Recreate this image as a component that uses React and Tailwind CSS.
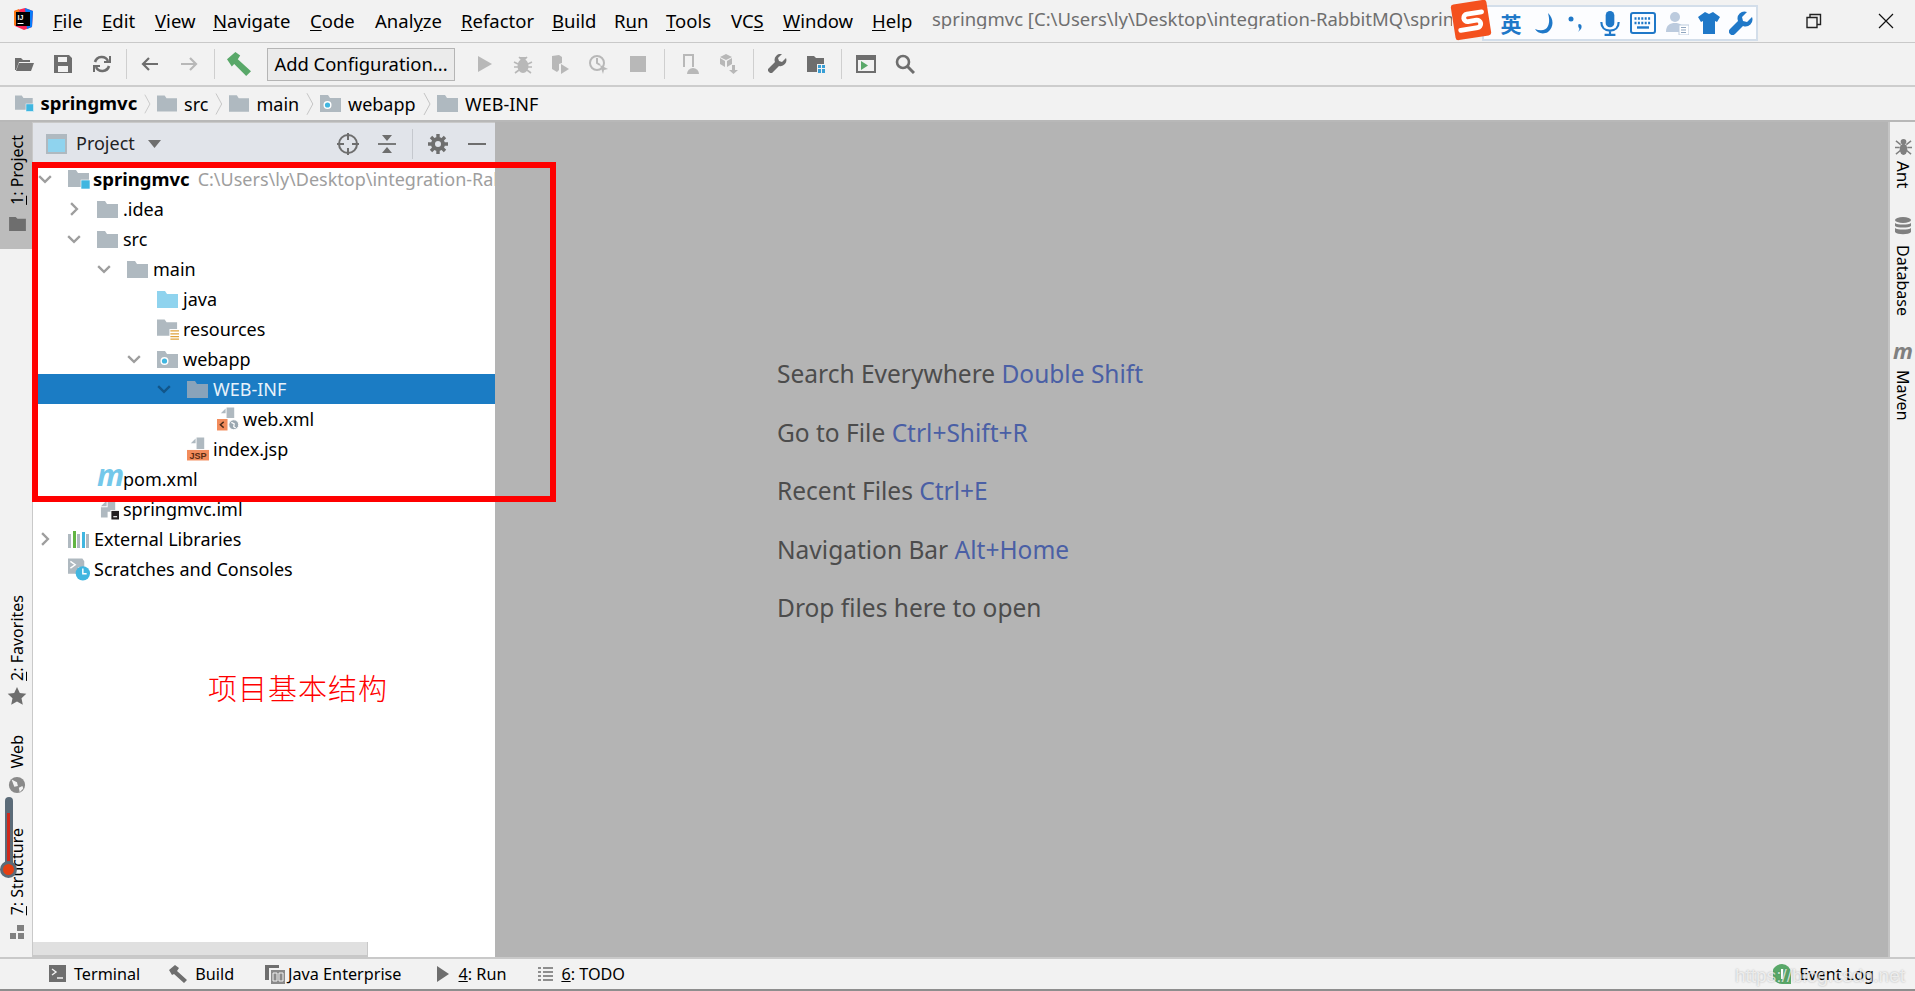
import { Fragment } from "react";

const FONT = "font-['Noto_Sans','Open_Sans',sans-serif]";

// --- icons ---
const Folder = ({ color = "#afb9c0", className = "w-[21px] h-[17px]" }) => (
  <svg viewBox="0 0 21 17" className={className}>
    <path d="M0 0h8l2 3h11v14H0z" fill={color} />
  </svg>
);

const ModuleFolder = () => (
  <svg viewBox="0 0 22 19" className="w-[22px] h-[19px]">
    <path d="M0 0h8l2 3h11v14H0z" fill="#afb9c0" />
    <rect x="13" y="10" width="9" height="9" fill="#40b6e0" stroke="#fff" strokeWidth="0.6" />
  </svg>
);

const WebFolder = ({ className = "w-[21px] h-[17px]" }) => (
  <svg viewBox="0 0 21 17" className={className}>
    <path d="M0 0h8l2 3h11v14H0z" fill="#afb9c0" />
    <circle cx="7.5" cy="10" r="4" fill="#fff" />
    <circle cx="7.5" cy="10" r="2.6" fill="#40b6e0" />
  </svg>
);

const ResourceFolder = () => (
  <svg viewBox="0 0 23 21" className="w-[23px] h-[21px]">
    <path d="M0 0h8l2 3h11v14H0z" fill="#afb9c0" />
    <rect x="13" y="10" width="10" height="11" fill="#fff" />
    <path d="M14 12h9M14 15h9M14 18h9M14 20.5h9" stroke="#e0a33c" strokeWidth="1.4" />
  </svg>
);

const Chevron = ({ open, color = "#9e9e9e" }) => (
  <svg viewBox="0 0 12 12" className="w-[14px] h-[14px]">
    <path d={open ? "M1 3.5l5 5 5-5" : "M3.5 1l5 5-5 5"} fill="none" stroke={color} strokeWidth="2" />
  </svg>
);

const XmlIcon = () => (
  <svg viewBox="0 0 23 24" className="w-[23px] h-[24px]">
    <path d="M4 11V6l5-5v5H4zM10 0h8v11h-8z" fill="#afb9c0" />
    <path d="M0 12h11v12H0z" fill="#f28c5c" />
    <path d="M7 15l-3.500 3L7 21" fill="none" stroke="#4a2a18" strokeWidth="1.5" />
    <circle cx="17.5" cy="18" r="5.2" fill="#9aa7b0" stroke="#fff" strokeWidth="1" />
    <path d="M15 15.500l3 1.500-.5 3 2 1.500" fill="none" stroke="#fff" strokeWidth="1.3" />
  </svg>
);

const JspIcon = () => (
  <svg viewBox="0 0 23 24" className="w-[23px] h-[24px]">
    <path d="M4 11V6l5-5v5H4zM10 0h8v12h-8z" fill="#afb9c0" />
    <rect x="0" y="13" width="23" height="11" fill="#f28c5c" />
    <text x="11.5" y="22.5" textAnchor="middle" fontSize="9.5" fontWeight="700" fill="#5b2d14" fontFamily="Liberation Sans">JSP</text>
  </svg>
);

const ImlIcon = () => (
  <svg viewBox="0 0 20 21" className="w-[20px] h-[21px]">
    <path d="M1 7l6-6v6H1zM8 0h8v13h-8zM1 8h7v11H1z" fill="#afb9c0" />
    <rect x="11" y="11" width="9" height="10" fill="#fff" />
    <rect x="12" y="12" width="8" height="9" fill="#231f20" />
    <rect x="14" y="17.5" width="4" height="1.2" fill="#fff" />
  </svg>
);

const LibrariesIcon = () => (
  <svg viewBox="0 0 21 17" className="w-[21px] h-[17px]">
    <path d="M0 3h3v14H0zM9 3h3v14H9z" fill="#afb9c0" />
    <path d="M5 0h3v17H5z" fill="#62b543" />
    <path d="M14 1h3v16h-3z" fill="#40b6e0" />
    <path d="M18 3h3v14h-3z" fill="#afb9c0" />
  </svg>
);

const ScratchIcon = () => (
  <svg viewBox="0 0 23 23" className="w-[23px] h-[23px]">
    <path d="M0 0h15l2 3v6h-6v7H0z" fill="#afb9c0" />
    <path d="M2.500 3l5 3.500-5 3.500" fill="none" stroke="#fff" strokeWidth="1.5" />
    <circle cx="15.5" cy="15.5" r="7.5" fill="#40b6e0" />
    <path d="M15.500 10.500v5.500h4" fill="none" stroke="#fff" strokeWidth="1.5" />
  </svg>
);

const ToolIcon = ({ children, size = "w-[20px] h-[20px]" }) => (
  <svg viewBox="0 0 20 20" className={size}>{children}</svg>
);

const GRAY = "#6e6e6e";
const DIS = "#b8b8b8";

const toolbar = [
  { w: "w-[39px]", icon: <path d="M1 4h6l2 2h7v2H5L2 16H1zM5 9h15l-3 8H2z" fill={GRAY} /> },
  { w: "w-[39px]", icon: <path fillRule="evenodd" d="M1 1h15l3 3v15H1zM5 3v5h9V3zM5 12v6h10v-6z" fill={GRAY} /> },
  { w: "w-[39px]", icon: <g fill="none" stroke={GRAY} strokeWidth="2.6"><path d="M3 8a7 7 0 0 1 13-1" /><path d="M17 12a7 7 0 0 1-13 1" /><path d="M12 8h6V2" strokeWidth="2" /><path d="M8 12H2v6" strokeWidth="2" /></g> },
  { sep: "w-[10px]" },
  { w: "w-[37px]", icon: <path d="M18 10H3M9 4l-6 6 6 6" fill="none" stroke={GRAY} strokeWidth="2.2" /> },
  { w: "w-[42px]", icon: <path d="M2 10h15M11 4l6 6-6 6" fill="none" stroke={DIS} strokeWidth="2.2" /> },
  { sep: "w-[8px]" },
  { w: "w-[42px]", big: true, icon: <path d="M0 6l7-6 4 3-2 3 11 10-4 4L6 10l-2 2z" fill="#59a869" /> },
  { button: true },
  { w: "w-[40px] ml-[9px]", icon: <path d="M4 2l14 8-14 8z" fill={DIS} /> },
  { w: "w-[37px]", icon: <g fill={DIS}><ellipse cx="10" cy="12" rx="5.5" ry="7" /><path d="M6 3l3 3h2l3-3M1 8l4 2M19 8l-4 2M1 13h4M19 13h-4M2 19l4-3M18 19l-4-3" stroke={DIS} strokeWidth="1.6" /></g> },
  { w: "w-[38px]", icon: <g fill={DIS}><path d="M2 2l7-1 3 2v6l-3 1v6l-2 2-5-3z" /><path d="M11 10l8 5-8 5z" /></g> },
  { w: "w-[39px]", icon: <g fill="none" stroke={DIS} strokeWidth="2"><circle cx="8" cy="9" r="7" /><path d="M8 4v5l3 2" /><path d="M11 11l8 4-4 1-1 4z" fill={DIS} stroke="none" /></g> },
  { w: "w-[39px]", icon: <rect x="2" y="2" width="16" height="16" fill={DIS} /> },
  { sep: "w-[14px]" },
  { w: "w-[38px]", icon: <g fill={DIS}><path fillRule="evenodd" d="M3 0h11v13h-2V2H5v11H3z" /><path d="M7 20a6 6 0 0 1 12 0z" /></g> },
  { w: "w-[39px]", icon: <g fill={DIS}><path d="M7 0l6 3-6 3-6-3zM1 4l5 3v6l-5-3zM13 4v6l-5 3V7z" /><path d="M13 11h3v5h3l-4.500 4L10 16h3z" /></g> },
  { sep: "w-[10px]" },
  { w: "w-[38px]", icon: <path d="M19 4l-4 4-3-1-1-3 4-4a6 6 0 0 0-7 8L1 15v2l2 2h2l7-7a6 6 0 0 0 7-8z" fill={GRAY} /> },
  { w: "w-[39px]", icon: <g><path d="M1 2h7l2 2h8v6h-7v8H1z" fill={GRAY} /><path d="M12 11h3v3h-3zM16 11h3v3h-3zM12 15h3v4h-3zM16 15h3v4h-3z" fill="#389fd6" /></g> },
  { sep: "w-[12px]" },
  { w: "w-[38px]", icon: <g><path fillRule="evenodd" d="M0 1h20v18H0zM2 6v11h16V6z" fill={GRAY} /><path d="M5 7l7 4.500-7 4.500z" fill="#59a869" /></g> },
  { w: "w-[39px]", icon: <g fill="none" stroke={GRAY} strokeWidth="2.6"><circle cx="8" cy="8" r="6" /><path d="M12 12l7 7" strokeWidth="3" /></g> },
];

const menus = [
  { w: "w-[49px]", pre: "", u: "F", post: "ile" },
  { w: "w-[53px]", pre: "", u: "E", post: "dit" },
  { w: "w-[58px]", pre: "", u: "V", post: "iew" },
  { w: "w-[97px]", pre: "", u: "N", post: "avigate" },
  { w: "w-[65px]", pre: "", u: "C", post: "ode" },
  { w: "w-[86px]", pre: "Anal", u: "y", post: "ze" },
  { w: "w-[91px]", pre: "", u: "R", post: "efactor" },
  { w: "w-[62px]", pre: "", u: "B", post: "uild" },
  { w: "w-[52px]", pre: "R", u: "u", post: "n" },
  { w: "w-[65px]", pre: "", u: "T", post: "ools" },
  { w: "w-[52px]", pre: "VC", u: "S", post: "" },
  { w: "w-[89px]", pre: "", u: "W", post: "indow" },
  { w: "w-[60px]", pre: "", u: "H", post: "elp" },
];

const TitleBar = () => (
  <div className="h-[43px] flex items-center bg-[#f2f2f2] border-b border-[#c9c9c9] shrink-0 overflow-hidden">
    <svg viewBox="0 0 24 24" className="w-[24px] h-[24px] ml-[11px] mb-[4px] shrink-0">
      <path d="M3 4l11-3 8 3-1 16-8 3-9-4z" fill="#fe2857" />
      <path d="M14 1l8 3-1 16-5 2z" fill="#087cfa" />
      <path d="M3 4l5-2 1 10-5 7-1-1z" fill="#fe7a16" />
      <rect x="5" y="5" width="14" height="14" fill="#000" />
      <text x="6.5" y="12.5" fontSize="7" fontWeight="700" fill="#fff" fontFamily="Liberation Sans">IJ</text>
      <rect x="6.5" y="16" width="6" height="1" fill="#fff" />
    </svg>
    <div className="flex ml-[18px] text-[18.5px] text-black leading-none shrink-0">
      {menus.map((m) => (
        <span key={m.u + m.post} className={m.w}>
          {m.pre}<span className="underline underline-offset-2">{m.u}</span>{m.post}
        </span>
      ))}
    </div>
    <span className="text-[18.5px] leading-none text-[#6f6f6f] whitespace-nowrap w-[520px] overflow-hidden shrink-0 mb-[3px]">
      springmvc [C:\Users\ly\Desktop\integration-RabbitMQ\springmvc]
    </span>
    <div className="ml-auto flex items-center shrink-0">
      <svg viewBox="0 0 16 16" className="w-[16px] h-[16px] mr-[56px]">
        <path d="M1 4.500h10v10H1zM4 4.500V1.500h10.500v10H11" fill="none" stroke="#222" strokeWidth="1.4" />
      </svg>
      <svg viewBox="0 0 16 16" className="w-[16px] h-[16px] mr-[21px]">
        <path d="M1 1l14 14M15 1L1 15" stroke="#111" strokeWidth="1.2" />
      </svg>
    </div>
  </div>
);

const SogouBar = () => (
  <div className="absolute left-[1450px] top-0 w-[309px] h-[41px] flex items-center">
    <div className="absolute left-[32px] top-[5px] w-[276px] h-[36px] bg-[#fcfdff] border-2 border-[#d3deea]" />
    <div className="absolute left-[3px] top-[2px] w-[36px] h-[36px] bg-[#f4511e] rounded-[3px] -rotate-[9deg] flex items-center justify-center">
      <svg viewBox="0 0 30 30" className="w-[32px] h-[32px]">
        <path d="M26 9H12a3.500 3.500 0 0 0 0 7h8a3.500 3.500 0 0 1 0 7H4" fill="none" stroke="#fff" strokeWidth="4.5" strokeLinecap="round" />
      </svg>
    </div>
    <div className="absolute left-[48px] top-[6px] h-[34px] flex items-center text-[#1f78c8]">
      <span className="w-[26px] text-center text-[21px] font-bold font-['Noto_Sans_CJK_SC',sans-serif] leading-none">英</span>
      <svg viewBox="0 0 24 24" className="w-[24px] h-[24px] ml-[9px]"><path d="M15 2c6 6 6 14 0 19-5 3-11 1-13-3 5 2 11 2 13-3 2-4 1-9 0-13z" fill="#1f78c8" /></svg>
      <svg viewBox="0 0 24 24" className="w-[24px] h-[24px] ml-[7px]"><circle cx="7" cy="8" r="2.5" fill="#1f78c8" /><path d="M15 13c3 0 3 3 2 5l-3 3c1-2 2-3 1-4-1-1-1-4 0-4z" fill="#1f78c8" /></svg>
      <svg viewBox="0 0 24 24" className="w-[26px] h-[26px] ml-[9px]"><rect x="8" y="1" width="8" height="15" rx="4" fill="#1f78c8" /><path d="M4 11c0 5 3 8 8 8s8-3 8-8M12 19v3M7 23h10" fill="none" stroke="#1f78c8" strokeWidth="2" /></svg>
      <svg viewBox="0 0 26 22" className="w-[26px] h-[22px] ml-[7px]">
        <rect x="1" y="1" width="24" height="20" rx="2" fill="none" stroke="#1f78c8" strokeWidth="2" />
        <path d="M4.500 6.500h17M4.500 11h17" stroke="#1f78c8" strokeWidth="2.4" strokeDasharray="2 1.400" />
        <path d="M7 15.500h12" stroke="#1f78c8" strokeWidth="2.4" />
      </svg>
      <svg viewBox="0 0 24 24" className="w-[24px] h-[24px] ml-[9px]"><circle cx="10" cy="6" r="5" fill="#bccbde" /><path d="M1 21c0-7 4-9 9-9s9 2 9 9z" fill="#bccbde" /><rect x="14" y="14" width="10" height="10" fill="#fff" stroke="#bccbde" /><path d="M16 16.500h5M16 19h5M16 21.500h5" stroke="#8fa5bf" /></svg>
      <svg viewBox="0 0 24 24" className="w-[24px] h-[24px] ml-[8px]"><path d="M8 1l4 2 4-2 7 5-3 5-2-1v13H6V10l-2 1-3-5z" fill="#1f78c8" /></svg>
      <svg viewBox="0 0 24 24" className="w-[24px] h-[24px] ml-[8px]"><path d="M23 6l-5 5-4-1-1-4 5-5a7 7 0 0 0-9 9L1 18a3 3 0 0 0 5 5l8-8a7 7 0 0 0 9-9z" fill="#1f78c8" /></svg>
    </div>
  </div>
);

const Toolbar = () => (
  <div className="h-[44px] flex items-center pl-[4px] bg-[#f2f2f2] border-b-2 border-[#cdcdcd] shrink-0">
    {toolbar.map((t, i) => {
      if (t.sep) {
        return (
          <div key={i} className={`${t.sep} h-[30px] flex justify-center`}>
            <div className="w-px h-full bg-[#cfcfcf]" />
          </div>
        );
      }
      if (t.button) {
        return (
          <div key={i} className="ml-[7px] w-[188px] h-[33px] flex items-center justify-center bg-[#ebebeb] border border-[#b5b5b5] text-[18.4px] text-black whitespace-nowrap">
            Add Configuration...
          </div>
        );
      }
      return (
        <div key={i} className={`${t.w} flex justify-center`}>
          <ToolIcon size={t.big ? "w-[24px] h-[24px]" : undefined}>{t.icon}</ToolIcon>
        </div>
      );
    })}
  </div>
);

const crumbs = [
  { label: "springmvc", bold: true, icon: <ModuleFolder />, w: "w-[142px]" },
  { label: "src", icon: <Folder />, w: "w-[72px]" },
  { label: "main", icon: <Folder />, w: "w-[91px]" },
  { label: "webapp", icon: <WebFolder />, w: "w-[117px]" },
  { label: "WEB-INF", icon: <Folder />, last: true, w: "w-[120px]" },
];

const NavBar = () => (
  <div className="h-[35px] flex items-center pl-[15px] bg-[#f2f2f2] border-b-2 border-[#b8b8b8] text-[18px] text-black shrink-0">
    {crumbs.map((c) => (
      <div key={c.label} className={`${c.w} flex items-center gap-[7px] shrink-0`}>
        {c.icon}
        <span className={c.bold ? "font-bold leading-none text-[18.5px]" : "leading-none"}>{c.label}</span>
        {!c.last && (
          <svg viewBox="0 0 8 24" className="w-[8px] h-[24px] ml-auto mr-[6px]">
            <path d="M1 1l6 11-6 11" fill="none" stroke="#c4c4c4" strokeWidth="1" />
          </svg>
        )}
      </div>
    ))}
  </div>
);

const rows = [
  { pl: "pl-[35px]", open: true, icon: <ModuleFolder />, label: "springmvc", bold: true, path: "C:\\Users\\ly\\Desktop\\integration-RabbitMQ\\springmvc" },
  { pl: "pl-[64px]", open: false, icon: <Folder />, label: ".idea" },
  { pl: "pl-[64px]", open: true, icon: <Folder />, label: "src" },
  { pl: "pl-[94px]", open: true, icon: <Folder />, label: "main" },
  { pl: "pl-[124px]", icon: <Folder color="#8fd3ee" />, label: "java", noChev: true },
  { pl: "pl-[124px]", icon: <ResourceFolder />, label: "resources", noChev: true },
  { pl: "pl-[124px]", open: true, icon: <WebFolder />, label: "webapp" },
  { pl: "pl-[154px]", open: true, icon: <Folder color="#89a3ba" />, label: "WEB-INF", selected: true },
  { pl: "pl-[184px]", icon: <XmlIcon />, label: "web.xml", noChev: true },
  { pl: "pl-[154px]", icon: <JspIcon />, label: "index.jsp", noChev: true },
  { pl: "pl-[64px]", icon: <span className="w-[21px] text-[30px] leading-none italic font-bold text-[#74c8ea] -mt-[9px]">m</span>, label: "pom.xml", noChev: true },
  { pl: "pl-[67px]", icon: <ImlIcon />, label: "springmvc.iml", noChev: true, tight: true },
  { pl: "pl-[35px]", open: false, icon: <LibrariesIcon />, label: "External Libraries" },
  { pl: "pl-[35px]", icon: <ScratchIcon />, label: "Scratches and Consoles", noChev: true },
];

const TreeRow = ({ r }) => (
  <div className={`h-[30px] flex items-center relative whitespace-nowrap ${r.pl} ${r.selected ? "bg-[#1b7cc4] text-[#e8f2fa]" : "text-black"}`}>
    {!r.noChev && (
      <span className="w-[30px] -ml-[38px] flex justify-center absolute">
        <Chevron open={r.open} color={r.selected ? "#12568a" : "#9e9e9e"} />
      </span>
    )}
    <span className={`shrink-0 flex items-center ${r.tight ? "w-[19px]" : "w-[22px]"}`}>{r.icon}</span>
    <span className={r.bold ? "ml-[3px] font-bold text-[18.5px]" : "ml-[4px]"}>{r.label}</span>
    {r.path && <span className="ml-[8px] text-[#9e9e9e]">{r.path}</span>}
  </div>
);

const ProjectPane = () => (
  <div className="w-[463px] shrink-0 flex flex-col bg-white border-l border-t border-[#c9c9c9] relative overflow-hidden">
    <div className="h-[41px] flex items-center bg-[#e1e4ea] text-[#222] text-[18px] shrink-0">
      <svg viewBox="0 0 21 20" className="w-[21px] h-[20px] ml-[13px]">
        <rect width="21" height="20" fill="#afb9c0" />
        <rect x="2" y="5" width="17" height="13" fill="#8fd3ee" />
      </svg>
      <span className="ml-[9px] w-[72px]">Project</span>
      <svg viewBox="0 0 13 8" className="w-[13px] h-[8px]"><path d="M0 0h13L6.500 8z" fill="#6e6e6e" /></svg>
      <svg viewBox="0 0 22 22" className="w-[22px] h-[22px] ml-[176px]">
        <circle cx="11" cy="11" r="9" fill="none" stroke="#6e6e6e" strokeWidth="2" />
        <path d="M11 0v7M11 15v7M0 11h7M15 11h7" stroke="#6e6e6e" strokeWidth="2" />
      </svg>
      <svg viewBox="0 0 20 20" className="w-[20px] h-[20px] ml-[18px]">
        <path d="M1 10h18" stroke="#6e6e6e" strokeWidth="1.8" />
        <path d="M5 1h10l-5 6zM5 19h10l-5-6z" fill="#6e6e6e" />
      </svg>
      <div className="w-px h-[30px] bg-[#c5c8ce] ml-[15px]" />
      <svg viewBox="0 0 20 20" className="w-[20px] h-[20px] ml-[15px]">
        <circle cx="10" cy="10" r="5" fill="none" stroke="#6e6e6e" strokeWidth="4" />
        <path d="M10 0v4M10 16v4M0 10h4M16 10h4M3 3l3 3M14 14l3 3M17 3l-3 3M6 14l-3 3" stroke="#6e6e6e" strokeWidth="3.4" />
      </svg>
      <div className="w-[18px] h-[2px] bg-[#6e6e6e] ml-[20px]" />
    </div>
    <div className="flex-1 text-[18px] leading-none">
      {rows.map((r) => <TreeRow key={r.label} r={r} />)}
    </div>
    <div className="h-[15px] w-[335px] bg-[#e0e0e0] border-r border-b-2 border-[#c8c8c8] shrink-0" />
    <div className="absolute left-[175px] top-[550px] text-[29px] leading-none tracking-[1px] text-[#ff0000] font-['Noto_Sans_CJK_SC',sans-serif] font-light">项目基本结构</div>
  </div>
);

const Stripe = ({ label, className = "", rotate = true }) => (
  <span className={`[writing-mode:vertical-rl] leading-none text-[16px] text-black whitespace-nowrap ${rotate ? "rotate-180" : ""} ${className}`}>
    {label}
  </span>
);

const LeftStripe = () => (
  <div className="w-[32px] shrink-0 flex flex-col items-center bg-[#f2f2f2] relative">
    <div className="w-full h-[127px] bg-[#bcbcbc] flex flex-col items-center pt-[13px] pl-[2px]">
      <Stripe label={<><span className="underline">1</span>: Project</>} />
      <svg viewBox="0 0 18 15" className="w-[17px] h-[14px] mt-[12px]"><path d="M0 0h7l2 2h9v13H0z" fill="#6e6e6e" /></svg>
    </div>
    <div className="mt-[346px] flex flex-col items-center pl-[2px]">
      <Stripe label={<><span className="underline">2</span>: Favorites</>} />
      <svg viewBox="0 0 20 20" className="w-[20px] h-[20px] mt-[5px]"><path d="M10 1l2.800 6 6.500.8-4.800 4.500 1.300 6.500L10 15.500 4.200 18.800l1.300-6.500L.7 7.800 7.200 7z" fill="#6e6e6e" /></svg>
    </div>
    <div className="mt-[29px] flex flex-col items-center pl-[2px]">
      <Stripe label="Web" />
      <svg viewBox="0 0 20 20" className="w-[18px] h-[18px] mt-[8px]">
        <circle cx="10" cy="10" r="9" fill="#8a8a8a" />
        <path d="M4 4l6 3 1 4-4 1zM12 13l4-2 1 3-4 4z" fill="#f2f2f2" />
      </svg>
    </div>
    <div className="mt-[34px] flex flex-col items-center pl-[2px]">
      <Stripe label={<><span className="underline">7</span>: Structure</>} />
      <svg viewBox="0 0 14 14" className="w-[14px] h-[14px] mt-[9px]"><path d="M7 0h7v6H7zM0 8h6v6H0zM8 8h6v6H8z" fill="#808080" /></svg>
    </div>
    {/* thermometer overlay */}
    <div className="absolute left-0 top-[675px] w-[17px] h-[81px] flex flex-col items-center">
      <div className="w-[8px] h-[69px] rounded-t-full bg-[#5b6b78] flex justify-center pt-[16px]">
        <div className="w-[3px] h-full bg-[#d0281a]" />
      </div>
      <div className="w-[17px] h-[17px] -mt-[5px] rounded-full bg-[#e53f12] border-[3px] border-[#5b6b78]" />
    </div>
  </div>
);

const RightStripe = () => (
  <div className="w-[27px] shrink-0 flex flex-col items-center bg-[#f2f2f2] border-l-2 border-[#c4c4c4] pt-[16px] pl-[1px]">
    <svg viewBox="0 0 18 18" className="w-[17px] h-[17px]">
      <g fill="#808080"><circle cx="9" cy="4" r="3" /><ellipse cx="9" cy="12" rx="4" ry="6" /><path d="M1 3l5 4M17 3l-5 4M0 10h5M18 10h-5M1 17l5-4M17 17l-5-4" stroke="#808080" strokeWidth="1.6" /></g>
    </svg>
    <Stripe label="Ant" rotate={false} className="mt-[6px] text-[17px]" />
    <svg viewBox="0 0 16 18" className="w-[16px] h-[18px] mt-[28px]">
      <g fill="#808080"><ellipse cx="8" cy="3" rx="8" ry="3" /><path d="M0 6c2 2 14 2 16 0v3c-2 2-14 2-16 0zM0 11c2 2 14 2 16 0v4c-2 3-14 3-16 0z" /></g>
    </svg>
    <Stripe label="Database" rotate={false} className="mt-[10px]" />
    <span className="mt-[24px] text-[22px] leading-none italic font-bold text-[#808080] h-[24px]">m</span>
    <Stripe label="Maven" rotate={false} className="mt-[7px]" />
  </div>
);

const hints = [
  { text: "Search Everywhere", key: "Double Shift" },
  { text: "Go to File", key: "Ctrl+Shift+R" },
  { text: "Recent Files", key: "Ctrl+E" },
  { text: "Navigation Bar", key: "Alt+Home" },
  { text: "Drop files here to open" },
];

const Editor = () => (
  <div className="flex-1 bg-[#b4b4b4] pl-[282px] pt-[223px] text-[24.5px] leading-[58.5px] text-[#4c4c4c]">
    {hints.map((h) => (
      <div key={h.text}>
        {h.text}{h.key && <Fragment> <span className="text-[#4a5fa5]">{h.key}</span></Fragment>}
      </div>
    ))}
  </div>
);

const StatusItem = ({ icon, children, className = "" }) => (
  <div className={`flex items-center ${className}`}>
    {icon}
    <span>{children}</span>
  </div>
);

const BottomBar = () => (
  <div className="h-[34px] flex items-center bg-[#f2f2f2] border-t-2 border-b-2 border-t-[#c9c9c9] border-b-[#8e8e8e] text-[16.2px] text-black shrink-0 relative">
    <StatusItem className="ml-[49px] gap-[8px]" icon={<svg viewBox="0 0 17 17" className="w-[17px] h-[17px]"><rect width="17" height="17" fill="#6e6e6e" /><path d="M3 4l4 3-4 3M8 13h6" fill="none" stroke="#f2f2f2" strokeWidth="1.4" /></svg>}>Terminal</StatusItem>
    <StatusItem className="ml-[29px] gap-[8px]" icon={<svg viewBox="0 0 18 18" className="w-[18px] h-[18px]"><path d="M0 5l6-5 4 3-2 3 10 9-3 3L5 9l-2 1z" fill="#6e6e6e" /></svg>}>Build</StatusItem>
    <StatusItem className="ml-[31px] gap-[3px]" icon={<svg viewBox="0 0 20 20" className="w-[20px] h-[20px]"><path d="M0 1h14v3h-10v12H0z" fill="#6e6e6e" /><rect x="6" y="6" width="14" height="14" fill="#8a8a8a" /><path d="M8 9h4v8H8zM14 9h4v8h-4z" fill="none" stroke="#f2f2f2" /></svg>}>Java Enterprise</StatusItem>
    <StatusItem className="ml-[35px] gap-[10px]" icon={<svg viewBox="0 0 12 16" className="w-[12px] h-[16px]"><path d="M0 0l12 8-12 8z" fill="#6e6e6e" /></svg>}><span className="underline">4</span>: Run</StatusItem>
    <StatusItem className="ml-[32px] gap-[8px]" icon={<svg viewBox="0 0 15 14" className="w-[15px] h-[14px]"><path d="M0 1h3M5 1h10M0 5h3M5 5h10M0 9h3M5 9h10M0 13h3M5 13h10" stroke="#6e6e6e" strokeWidth="1.6" /></svg>}><span className="underline">6</span>: TODO</StatusItem>
    <StatusItem className="ml-auto mr-[41px] gap-[8px]" icon={<svg viewBox="0 0 18 20" className="w-[18px] h-[20px]"><path d="M9 0a9 9 0 0 1 9 9v11H9A9 9 0 0 1 9 0z" fill="#59a869" /><rect x="8" y="5" width="2.2" height="10" fill="#fff" /></svg>}>Event Log</StatusItem>
    <span className="absolute right-[10px] top-[3px] text-[19px] font-['Liberation_Sans',sans-serif] text-white/70 whitespace-nowrap [text-shadow:0_0_2px_rgba(0,0,0,0.3)]">https://blog.csdn.net</span>
  </div>
);

export default function App() {
  return (
    <div className={`w-[1915px] h-[991px] flex flex-col overflow-hidden relative ${FONT}`}>
      <TitleBar />
      <SogouBar />
      <Toolbar />
      <NavBar />
      <div className="flex-1 flex min-h-0">
        <LeftStripe />
        <ProjectPane />
        <Editor />
        <RightStripe />
      </div>
      <BottomBar />
      {/* red annotation box drawn over the tree */}
      <div className="absolute left-[32px] top-[162px] w-[524px] h-[340px] border-[6px] border-[#ff0000]" />
    </div>
  );
}
